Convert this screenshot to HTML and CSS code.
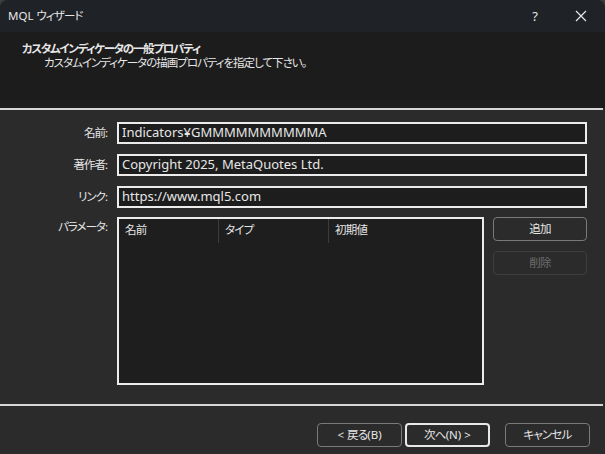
FILE: index.html
```html
<!DOCTYPE html>
<html lang="ja">
<head>
<meta charset="utf-8">
<title>MQL ウィザード</title>
<link rel="stylesheet" href="styles.css">
</head>
<body>
<div class="window">
  <div class="titlebar">
    <span class="title"><span class="lat">MQL </span>ウィザード</span>
    <span class="tb-help">?</span>
    <span class="tb-close"><svg width="12" height="12" viewBox="0 0 12 12"><path d="M1 1 L11 11 M11 1 L1 11" stroke="#e8e8e8" stroke-width="1.2" fill="none"/></svg></span>
  </div>
  <div class="header">
    <div class="h-title">カスタムインディケータの一般プロパティ</div>
    <div class="h-sub">カスタムインディケータの描画プロパティを指定して下さい。</div>
  </div>
  <div class="hline"></div>
  <div class="content">
    <div class="form">
      <label class="lbl">名前:</label>
      <div class="input">Indicators¥GMMMMMMMMMMA</div>
      <label class="lbl">著作者:</label>
      <div class="input">Copyright 2025, MetaQuotes Ltd.</div>
      <label class="lbl">リンク:</label>
      <div class="input">https://www.mql5.com</div>
      <label class="lbl lbl-top">パラメータ:</label>
      <div class="params">
        <div class="table">
          <div class="thead">
            <div class="th th1">名前</div>
            <div class="th th2">タイプ</div>
            <div class="th th3">初期値</div>
          </div>
        </div>
        <div class="side">
          <button class="btn btn-add">追加</button>
          <button class="btn btn-del">削除</button>
        </div>
      </div>
    </div>
  </div>
  <div class="fline"></div>
  <div class="footer">
    <button class="btn fbtn"><span class="lat">&lt; </span>戻る<span class="lat">(B)</span></button>
    <button class="btn fbtn default">次へ<span class="lat">(N) &gt;</span></button>
    <button class="btn fbtn cancel">キャンセル</button>
  </div>
</div>
</body>
</html>
```

FILE: styles.css
```css
html, body {
  margin: 0;
  padding: 0;
  background: #3c3c3c;
}
body {
  font-family: "Noto Sans", "Noto Sans CJK JP", sans-serif;
  font-size: 12px;
  color: #e6e6e6;
  font-feature-settings: "palt";
}
.lat {
  letter-spacing: 0;
}
.window {
  width: 605px;
  height: 454px;
  background: #2b2b2b;
  border-radius: 8px 8px 0 0;
  overflow: hidden;
  display: flex;
  flex-direction: column;
}
.titlebar {
  height: 32px;
  background: #1f2227;
  display: flex;
  align-items: center;
  padding-left: 8px;
  flex-shrink: 0;
}
.title {
  flex: 1;
  font-size: 11.5px;
  letter-spacing: -0.9px;
  line-height: 1;
  margin-top: -1px;
}
.tb-help {
  width: 12px;
  text-align: center;
  margin-right: 34px;
  font-size: 13px;
}
.tb-close {
  width: 12px;
  height: 12px;
  margin-right: 18px;
  display: flex;
}
.header {
  height: 76px;
  background: #1c1c1c;
  padding: 10px 0 0 22px;
  box-sizing: border-box;
  flex-shrink: 0;
}
.h-title {
  font-weight: bold;
  font-size: 11.5px;
  letter-spacing: -1.3px;
  line-height: 14px;
}
.h-sub {
  padding-left: 22px;
  font-size: 11.5px;
  letter-spacing: -1px;
  line-height: 14px;
}
.hline {
  height: 2px;
  background: #d6d6d6;
  margin-right: 2px;
  flex-shrink: 0;
}
.content {
  height: 293px;
  padding-top: 12px;
  box-sizing: border-box;
  flex-shrink: 0;
}
.form {
  display: grid;
  grid-template-columns: 108px 470px;
  column-gap: 9px;
  row-gap: 10px;
}
.lbl {
  text-align: right;
  align-self: center;
  line-height: 14px;
  font-size: 11.5px;
  letter-spacing: -1px;
  padding-right: 1px;
}
.lbl-top {
  align-self: start;
  margin-top: 2px;
}
.input {
  height: 22px;
  box-sizing: border-box;
  border: 2px solid #ececec;
  background: #1d1d1d;
  padding: 0 0 0 3px;
  line-height: 17px;
  font-size: 13px;
  white-space: nowrap;
  overflow: hidden;
}
.params {
  display: flex;
  gap: 9px;
  margin-top: -1px;
}
.table {
  width: 367px;
  height: 168px;
  box-sizing: border-box;
  border: 2px solid #ececec;
  background: #1e1e1e;
}
.thead {
  display: flex;
  height: 24px;
}
.th {
  box-sizing: border-box;
  padding: 4px 0 0 6px;
  line-height: 14px;
  font-size: 11.5px;
  letter-spacing: -0.8px;
  border-right: 1px solid #3c3c3c;
}
.th1 { width: 100px; }
.th2 { width: 110px; }
.th3 { flex: 1; border-right: none; }
.side {
  display: flex;
  flex-direction: column;
  gap: 10px;
  width: 94px;
}
.btn {
  font-family: inherit;
  font-feature-settings: "palt";
  font-size: 11.5px;
  letter-spacing: -0.8px;
  color: #e6e6e6;
  background: #2b2b2b;
  border: 1px solid #7a7a7a;
  border-radius: 4px;
  height: 24px;
  padding: 0;
  line-height: 20px;
  box-sizing: border-box;
}
.btn-del {
  border-color: #3e3e3e;
  color: #6e6e6e;
}
.fline {
  height: 2px;
  background: #d6d6d6;
  margin-top: 1px;
  margin-right: 2px;
  flex-shrink: 0;
}
.footer {
  display: flex;
  justify-content: flex-end;
  padding: 17px 15px 0 0;
  gap: 3px;
}
.fbtn {
  width: 85px;
}
.default {
  border: 2px solid #e8e8e8;
}
.cancel {
  margin-left: 12px;
}
```
